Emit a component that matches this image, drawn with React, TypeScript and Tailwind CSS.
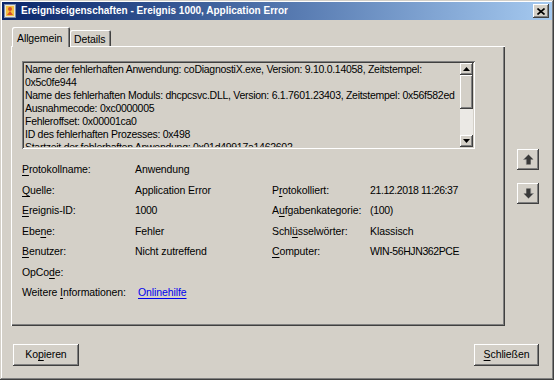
import React from "react";

const raised =
  "shadow-[inset_-1px_-1px_#404040,inset_1px_1px_#ffffff,inset_-2px_-2px_#808080]";

function U({ children }: { children: React.ReactNode }) {
  return <span className="underline underline-offset-[2px] decoration-1">{children}</span>;
}

function Arrow({ down }: { down?: boolean }) {
  return (
    <svg width="11" height="11" viewBox="0 0 10 10" className={down ? "rotate-180" : ""}>
      <path d="M5 0.5 L9.5 5 L7 5 L7 9.5 L3 9.5 L3 5 L0.5 5 Z" fill="#3a3a3a" />
      <path d="M5 0.5 L0.5 5 L3 5 L3 9.5" fill="none" stroke="#8a8a8a" strokeWidth="0.6" />
    </svg>
  );
}

function Tri({ down }: { down?: boolean }) {
  return (
    <svg width="7" height="4" viewBox="0 0 7 4">
      {down ? <path d="M0 0 L7 0 L3.5 4 Z" fill="#000" /> : <path d="M0 4 L7 4 L3.5 0 Z" fill="#000" />}
    </svg>
  );
}

export default function App() {
  const lines = [
    "Name der fehlerhaften Anwendung: coDiagnostiX.exe, Version: 9.10.0.14058, Zeitstempel:",
    "0x5c0fe944",
    "Name des fehlerhaften Moduls: dhcpcsvc.DLL, Version: 6.1.7601.23403, Zeitstempel: 0x56f582ed",
    "Ausnahmecode: 0xc0000005",
    "Fehleroffset: 0x00001ca0",
    "ID des fehlerhaften Prozesses: 0x498",
    "Startzeit der fehlerhaften Anwendung: 0x01d49917a1462602",
  ];

  return (
    <div
      className="w-[554px] h-[380px] bg-[#d4d0c8] p-[2px] text-[10.5px] tracking-[-0.1px] text-black shadow-[inset_-1px_-1px_#404040,inset_1px_1px_#d4d0c8,inset_-2px_-2px_#808080,inset_2px_2px_#ffffff] overflow-hidden"
      style={{ fontFamily: '"Liberation Sans", Arial, sans-serif' }}
    >
      {/* Title bar */}
      <div className="h-[18px] flex items-center bg-linear-to-r from-[#0a246a] to-[#a6caf0] pl-[2px] pr-[3px]">
        <svg width="12" height="14" viewBox="0 0 12 14" className="shrink-0">
          <rect x="0.5" y="0.5" width="11" height="13" fill="#e8e4d8" stroke="#7a8aa8" />
          <rect x="2" y="2" width="8" height="10" fill="#f4c040" />
          <circle cx="6" cy="5" r="2" fill="#d8502a" />
          <path d="M3 11 L6 7 L9 11 Z" fill="#d8502a" />
        </svg>
        <span className="ml-[5px] font-bold text-white text-[10px] tracking-normal leading-none">
          Ereigniseigenschaften - Ereignis 1000, Application Error
        </span>
        <div className="flex-1" />
        <div className={`w-[16px] h-[14px] bg-[#d4d0c8] flex items-center justify-center ${raised}`}>
          <svg width="8" height="7" viewBox="0 0 8 7">
            <path d="M0.5 0.5 L7.5 6.5 M7.5 0.5 L0.5 6.5" stroke="#000" strokeWidth="1.6" />
          </svg>
        </div>
      </div>

      {/* Body */}
      <div className="pl-[9px] pt-[7px]">
        <div className="flex">
          <div className="w-[494px] flex flex-col">
            {/* Tabs */}
            <div className="h-[19px] flex items-end">
              <div className="relative z-10 ml-[1px] -mb-[1px] w-[58px] h-[20px] bg-[#d4d0c8] rounded-t-[2px] shadow-[inset_1px_1px_#ffffff,inset_-1px_0_#404040,inset_-2px_0_#808080] flex items-start pl-[5px] pt-[4px]">
                Allgemein
              </div>
              <div className="w-[41px] h-[16px] bg-[#d4d0c8] rounded-t-[2px] shadow-[inset_1px_1px_#ffffff,inset_-1px_0_#404040,inset_-2px_0_#808080] flex items-start pl-[4px] pt-[2px]">
                Details
              </div>
            </div>
            {/* Panel */}
            <div className="h-[280px] bg-[#d4d0c8] shadow-[inset_1px_1px_#ffffff,inset_-1px_-1px_#404040,inset_-2px_-2px_#808080] pl-[11px] pt-[15px]">
              <div className="w-[453px] h-[88px] flex p-[2px] shadow-[inset_1px_1px_#808080,inset_-1px_-1px_#ffffff,inset_2px_2px_#404040,inset_-2px_-2px_#d4d0c8]">
                <div className="flex-1 overflow-hidden pl-[1px] leading-[13px] whitespace-pre tracking-[-0.28px]">
                  {lines.map((l, i) => (
                    <div key={i} className="h-[13px]">
                      {l}
                    </div>
                  ))}
                </div>
                <div className="w-[13px] flex flex-col">
                  <div className={`h-[12px] flex items-center justify-center ${raised}`}>
                    <Tri />
                  </div>
                  <div className={`h-[34px] ${raised}`} />
                  <div className="flex-1 bg-[#ebe9e5]" />
                  <div className={`h-[12px] flex items-center justify-center ${raised}`}>
                    <Tri down />
                  </div>
                </div>
              </div>

              <div className="mt-[11px] grid grid-cols-[113px_137px_98px_1fr] auto-rows-[20.45px] items-center">
                <div><U>P</U>rotokollname:</div>
                <div>Anwendung</div>
                <div />
                <div />

                <div><U>Q</U>uelle:</div>
                <div>Application Error</div>
                <div>P<U>r</U>otokolliert:</div>
                <div className="tracking-[-0.4px]">21.12.2018 11:26:37</div>

                <div><U>E</U>reignis-ID:</div>
                <div className="tracking-[-0.3px]">1000</div>
                <div>A<U>u</U>fgabenkategorie:</div>
                <div className="tracking-[-0.3px]">(100)</div>

                <div>Ebe<U>n</U>e:</div>
                <div>Fehler</div>
                <div>Schl<U>ü</U>sselwörter:</div>
                <div>Klassisch</div>

                <div><U>B</U>enutzer:</div>
                <div>Nicht zutreffend</div>
                <div><U>C</U>omputer:</div>
                <div className="tracking-[-0.4px]">WIN-56HJN362PCE</div>

                <div>OpCo<U>d</U>e:</div>
                <div />
                <div />
                <div />

                <div className="whitespace-nowrap">Weitere <U>I</U>nformationen:</div>
                <div className="pl-[3px]">
                  <span className="text-[#0000ee] underline underline-offset-[2px] decoration-1">Onlinehilfe</span>
                </div>
                <div />
                <div />
              </div>
            </div>
          </div>

          {/* Right arrows */}
          <div className="ml-[12px] pt-[122px] flex flex-col gap-[13px]">
            <div className={`w-[22px] h-[21px] bg-[#d4d0c8] flex items-center justify-center ${raised}`}>
              <Arrow />
            </div>
            <div className={`w-[22px] h-[21px] bg-[#d4d0c8] flex items-center justify-center ${raised}`}>
              <Arrow down />
            </div>
          </div>
        </div>

        {/* Buttons */}
        <div className="mt-[18px] ml-[2px] w-[526px] flex justify-between">
          <div className={`w-[66px] h-[22px] flex items-center justify-center ${raised}`}>
            Ko<U>p</U>ieren
          </div>
          <div className={`w-[65px] h-[22px] flex items-center justify-center ${raised}`}>
            <U>S</U>chließen
          </div>
        </div>
      </div>
    </div>
  );
}
